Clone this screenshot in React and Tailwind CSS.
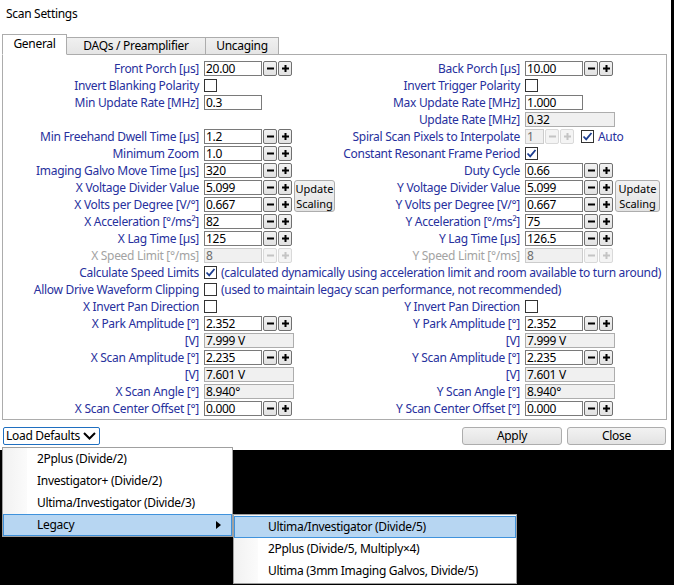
import React from 'react';

const FONT = { fontFamily: '"Noto Sans", "Open Sans", sans-serif' };

function Box({ value, wide, small, readOnly, disabled }) {
  const w = wide ? 'w-[90px]' : small ? 'w-[19px]' : 'w-[58px]';
  const look = disabled
    ? 'bg-[#f0f0f0] border-[#cccccc] text-[#6d6d6d]'
    : readOnly
    ? 'bg-[#f0f0f0] border-[#adadad] text-black'
    : 'bg-white border-[#7a7a7a] text-black';
  return (
    <div className={`${w} h-[15px] border ${look} pl-[1px] text-[12px] leading-[13px] whitespace-nowrap overflow-hidden`}>
      {value}
    </div>
  );
}

function SpinBtn({ plus, disabled }) {
  const c = disabled ? '#c4c4c4' : '#000';
  return (
    <div
      className={`w-[14px] h-[15px] rounded-[2px] border flex items-center justify-center ${
        disabled ? 'border-[#d9d9d9] bg-[#f4f4f4]' : 'border-[#707070] bg-gradient-to-b from-[#f2f2f2] to-[#e2e2e2]'
      }`}
    >
      <svg width="9" height="9" viewBox="0 0 9 9">
        <rect x="1" y="3.5" width="7" height="2" fill={c} />
        {plus && <rect x="3.5" y="1" width="2" height="7" fill={c} />}
      </svg>
    </div>
  );
}

function Spin({ disabled }) {
  return (
    <div className="flex gap-[1px] ml-[1px]">
      <SpinBtn disabled={disabled} />
      <SpinBtn plus disabled={disabled} />
    </div>
  );
}

function Check({ checked }) {
  return (
    <div className="w-[13px] h-[13px] border border-[#333333] bg-white flex items-center justify-center">
      {checked && (
        <svg width="11" height="11" viewBox="0 0 11 11">
          <path d="M1.5 5.5 L4.2 8.3 L9.5 2" fill="none" stroke="#1a3c8f" strokeWidth="1.8" />
        </svg>
      )}
    </div>
  );
}

function UpdateScaling() {
  return (
    <div className="ml-[2px] w-[45px] h-[32px] rounded-[3px] border border-[#adadad] bg-gradient-to-b from-[#f2f2f2] to-[#e3e3e3] flex flex-col items-center justify-center text-[11px] leading-[15px] tracking-normal text-black">
      <span className="block h-[15px]">Update</span>
      <span className="block h-[15px]">Scaling</span>
    </div>
  );
}

function Label({ children, disabled }) {
  return (
    <div
      className={`h-[17px] flex items-center justify-end text-[12px] whitespace-nowrap ${
        disabled ? 'text-[#a3a3a3]' : 'text-[#27309d]'
      }`}
    >
      {children}
    </div>
  );
}

function Ctl({ children }) {
  return <div className="h-[17px] flex items-center">{children}</div>;
}

// one half of the panel: rows of [label, control]; "pair" rows hold two rows + Update Scaling
function Half({ rows, labelW }) {
  const cells = [];
  rows.forEach((r, i) => {
    if (r.pair) {
      cells.push(<Label key={`l${i}a`}>{r.pair[0].label}</Label>);
      cells.push(
        <div key={`c${i}`} className="row-span-2 flex items-center">
          <div className="flex flex-col">
            {r.pair.map((p, j) => (
              <Ctl key={j}>
                <Box value={p.value} />
                <Spin />
              </Ctl>
            ))}
          </div>
          <UpdateScaling />
        </div>
      );
      cells.push(<Label key={`l${i}b`}>{r.pair[1].label}</Label>);
      return;
    }
    cells.push(
      <Label key={`l${i}`} disabled={r.disabled}>
        {r.label}
      </Label>
    );
    cells.push(<Ctl key={`c${i}`}>{r.ctl}</Ctl>);
  });
  return (
    <div className={`grid ${labelW} gap-x-[5px] auto-rows-[17px]`}>{cells}</div>
  );
}

const num = (v) => (
  <>
    <Box value={v} />
    <Spin />
  </>
);

const leftTop = [
  { label: 'Front Porch [µs]', ctl: num('20.00') },
  { label: 'Invert Blanking Polarity', ctl: <Check /> },
  { label: 'Min Update Rate [MHz]', ctl: <Box value="0.3" /> },
  { label: '', ctl: null },
  { label: 'Min Freehand Dwell Time [µs]', ctl: num('1.2') },
  { label: 'Minimum Zoom', ctl: num('1.0') },
  { label: 'Imaging Galvo Move Time [µs]', ctl: num('320') },
  { pair: [{ label: 'X Voltage Divider Value', value: '5.099' }, { label: 'X Volts per Degree [V/°]', value: '0.667' }] },
  { label: 'X Acceleration [°/ms²]', ctl: num('82') },
  { label: 'X Lag Time [µs]', ctl: num('125') },
  {
    label: 'X Speed Limit [°/ms]',
    disabled: true,
    ctl: (
      <>
        <Box value="8" disabled />
        <Spin disabled />
      </>
    ),
  },
];

const rightTop = [
  { label: 'Back Porch [µs]', ctl: num('10.00') },
  { label: 'Invert Trigger Polarity', ctl: <Check /> },
  { label: 'Max Update Rate [MHz]', ctl: <Box value="1.000" /> },
  { label: 'Update Rate [MHz]', ctl: <Box value="0.32" wide readOnly /> },
  {
    label: 'Spiral Scan Pixels to Interpolate',
    ctl: (
      <>
        <Box value="1" small disabled />
        <Spin disabled />
        <div className="ml-[7px]">
          <Check checked />
        </div>
        <span className="ml-[4px] text-[12px] text-[#27309d]">Auto</span>
      </>
    ),
  },
  { label: 'Constant Resonant Frame Period', ctl: <Check checked /> },
  { label: 'Duty Cycle', ctl: num('0.66') },
  { pair: [{ label: 'Y Voltage Divider Value', value: '5.099' }, { label: 'Y Volts per Degree [V/°]', value: '0.667' }] },
  { label: 'Y Acceleration [°/ms²]', ctl: num('75') },
  { label: 'Y Lag Time [µs]', ctl: num('126.5') },
  {
    label: 'Y Speed Limit [°/ms]',
    disabled: true,
    ctl: (
      <>
        <Box value="8" disabled />
        <Spin disabled />
      </>
    ),
  },
];

const bottom = (a) => [
  { label: `${a} Invert Pan Direction`, ctl: <Check /> },
  { label: `${a} Park Amplitude [°]`, ctl: num('2.352') },
  { label: '[V]', ctl: <Box value="7.999 V" wide readOnly /> },
  { label: `${a} Scan Amplitude [°]`, ctl: num('2.235') },
  { label: '[V]', ctl: <Box value="7.601 V" wide readOnly /> },
  { label: `${a} Scan Angle [°]`, ctl: <Box value="8.940°" wide readOnly /> },
  { label: `${a} Scan Center Offset [°]`, ctl: num('0.000') },
];

function WideRow({ label, checked, note }) {
  return (
    <div className="flex h-[17px] items-center">
      <div className="w-[195px] mr-[5px]">
        <Label>{label}</Label>
      </div>
      <Check checked={checked} />
      <span className="ml-[4px] text-[12px] whitespace-nowrap text-[#27309d]">{note}</span>
    </div>
  );
}

function Panel() {
  const lw = 'grid-cols-[195px_131px]';
  const rw = 'grid-cols-[180px_1fr]';
  return (
    <div className="ml-[2px] w-[665px] h-[366px] border border-[#acacac] pt-[5px] pl-[1px] bg-white">
      <div className="flex">
        <Half rows={leftTop} labelW={lw} />
        <div className="ml-[5px] flex-1">
          <Half rows={rightTop} labelW={rw} />
        </div>
      </div>
      <WideRow
        label="Calculate Speed Limits"
        checked
        note="(calculated dynamically using acceleration limit and room available to turn around)"
      />
      <WideRow
        label="Allow Drive Waveform Clipping"
        note="(used to maintain legacy scan performance, not recommended)"
      />
      <div className="flex">
        <Half rows={bottom('X')} labelW={lw} />
        <div className="ml-[5px] flex-1">
          <Half rows={bottom('Y')} labelW={rw} />
        </div>
      </div>
    </div>
  );
}

function Tabs() {
  return (
    <div className="flex items-end pl-[2px] h-[21px] relative z-10 -mb-[1px]">
      <div className="w-[65px] h-[21px] bg-white border border-[#acacac] border-b-white flex items-center justify-center text-[12px] text-black pb-[2px]">
        General
      </div>
      <div className="w-[139px] h-[18px] bg-gradient-to-b from-[#f0f0f0] to-[#e5e5e5] border border-l-0 border-[#acacac] border-b-[#acacac] flex items-center justify-center text-[12px] text-black">
        DAQs / Preamplifier
      </div>
      <div className="w-[73px] h-[18px] bg-gradient-to-b from-[#f0f0f0] to-[#e5e5e5] border border-l-0 border-[#acacac] flex items-center justify-center text-[12px] text-black">
        Uncaging
      </div>
    </div>
  );
}

function MenuItem({ text, active, arrow, textX = 'pl-[33px]' }) {
  return (
    <div
      className={`h-[22px] flex items-center text-[12px] text-black border whitespace-nowrap ${textX} ${
        active ? 'bg-[#b7d6f2] border-[#3f92dc]' : 'border-transparent'
      }`}
    >
      <span className="flex-1">{text}</span>
      {arrow && (
        <svg width="5" height="8" viewBox="0 0 5 8" className="mr-[10px]">
          <path d="M0 0 L5 4 L0 8 Z" fill="#000" />
        </svg>
      )}
    </div>
  );
}

export default function App() {
  return (
    <div className="w-[674px] h-[585px] bg-black relative overflow-hidden tracking-[-0.3px]" style={FONT}>
      <div className="w-[671px] h-[450px] bg-white">
        <div className="h-[34px] pl-[6px] pt-[5px] text-[12px] text-black">Scan Settings</div>
        <Tabs />
        <Panel />
        <div className="flex items-center mt-[7px] pl-[3px] pr-[5px]">
          <div className="w-[97px] h-[18px] border border-[#1f6fc0] rounded-[2px] flex items-center pl-[2px] text-[12px] text-black whitespace-nowrap">
            <span className="flex-1">Load Defaults</span>
            <svg width="13" height="8" viewBox="0 0 13 8" className="mr-[3px] shrink-0">
              <path d="M1 1 L6.5 6.5 L12 1" fill="none" stroke="#000" strokeWidth="2" />
            </svg>
          </div>
          <div className="flex-1" />
          <div className="w-[100px] h-[18px] rounded-[3px] border border-[#adadad] bg-gradient-to-b from-[#f2f2f2] to-[#e3e3e3] flex items-center justify-center text-[12px] text-black">
            Apply
          </div>
          <div className="ml-[5px] w-[99px] h-[18px] rounded-[3px] border border-[#adadad] bg-gradient-to-b from-[#f2f2f2] to-[#e3e3e3] flex items-center justify-center text-[12px] text-black">
            Close
          </div>
        </div>
      </div>

      {/* dropdown menu */}
      <div className="absolute left-[2px] top-[447px] w-[231px] h-[90px] bg-white border border-[#a0a0a0] flex">
        <div className="absolute left-0 top-0 bottom-0 w-[24px] bg-gradient-to-r from-[#f1f1f1] to-[#fbfbfb]" />
        <div className="relative flex-1 flex flex-col">
          <MenuItem text="2Pplus (Divide/2)" />
          <MenuItem text="Investigator+ (Divide/2)" />
          <MenuItem text="Ultima/Investigator (Divide/3)" />
          <MenuItem text="Legacy" active arrow />
        </div>
      </div>

      {/* submenu */}
      <div className="absolute left-[233px] top-[514px] w-[284px] h-[70px] bg-white border border-[#a0a0a0] flex">
        <div className="absolute left-0 top-0 bottom-0 w-[24px] bg-gradient-to-r from-[#f1f1f1] to-[#fbfbfb]" />
        <div className="relative flex-1 flex flex-col pt-[1px]">
          <MenuItem text="Ultima/Investigator (Divide/5)" active />
          <MenuItem text="2Pplus (Divide/5, Multiply×4)" />
          <MenuItem text="Ultima (3mm Imaging Galvos, Divide/5)" />
        </div>
      </div>
    </div>
  );
}
